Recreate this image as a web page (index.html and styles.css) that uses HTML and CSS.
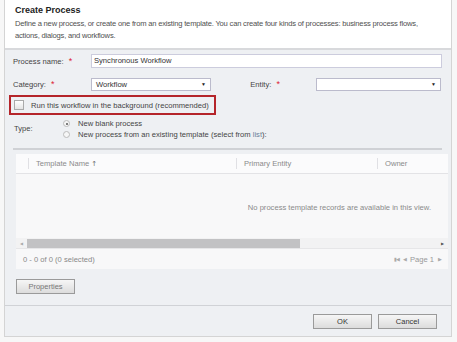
FILE: index.html
```html
<!DOCTYPE html>
<html lang="en">
<head>
    <meta charset="UTF-8">
    <title>Create Process</title>
    <link rel="stylesheet" href="styles.css">
</head>
<body>
    <div class="dialog">
        <div class="dialog-header">
            <h2>Create Process</h2>
            <p>Define a new process, or create one from an existing template. You can create four kinds of processes: business process flows, actions, dialogs, and workflows.</p>
        </div>

        <div class="dialog-body">
            <div class="form-row">
                <label class="field-label">Process name: <span class="req">*</span></label>
                <div class="text-input">Synchronous Workflow</div>
            </div>
            <div class="form-row">
                <label class="field-label">Category: <span class="req">*</span></label>
                <div class="select select-category">Workflow <span class="caret">&#9660;</span></div>
                <label class="entity-label">Entity: <span class="req">*</span></label>
                <div class="select select-entity"><span class="caret">&#9660;</span></div>
            </div>
            <div class="background-option">
                <span class="checkbox"></span>
                <span>Run this workflow in the background (recommended)</span>
            </div>
            <div class="type-row">
                <span class="type-label">Type:</span>
                <div class="radio-list">
                    <div class="radio-item"><span class="radio checked"></span>New blank process</div>
                    <div class="radio-item"><span class="radio"></span>New process from an existing template (select from&nbsp;<span class="link">list</span>):</div>
                </div>
            </div>

            <div class="grid">
                <div class="grid-head">
                    <span class="col col-first"></span>
                    <span class="col col-name">Template Name <span class="arrow">&#8593;</span></span>
                    <span class="col col-entity">Primary Entity</span>
                    <span class="col col-owner">Owner</span>
                </div>
                <div class="grid-empty">No process template records are available in this view.</div>
                <div class="scrollbar">
                    <span class="scroll-arrow">&#9664;</span>
                    <div class="scroll-track"><div class="scroll-thumb"></div></div>
                    <span class="scroll-arrow dark">&#9654;</span>
                </div>
                <div class="grid-foot">
                    <span>0 - 0 of 0 (0 selected)</span>
                    <span class="paging">
                        <span class="pg-icon">&#9646;&#9664;</span>
                        <span class="pg-icon">&#9664;</span>
                        <span>Page 1</span>
                        <span class="pg-icon">&#9654;</span>
                    </span>
                </div>
            </div>

            <button class="btn btn-props">Properties</button>
        </div>

        <div class="dialog-footer">
            <button class="btn btn-wide">OK</button>
            <button class="btn btn-wide">Cancel</button>
        </div>
    </div>
</body>
</html>
```

FILE: styles.css
```css
body {
    margin: 0;
    background-color: #f7f7f7;
    font-family: "Liberation Sans", Arial, sans-serif;
    font-size: 7.6px;
    color: #444;
}
.dialog {
    width: 446px;
    margin-left: 4px;
    border-left: 1px solid #d4d4d4;
    border-right: 1px solid #d4d4d4;
    border-bottom: 1px solid #d4d4d4;
    background-color: #eef0f3;
}
.dialog-header {
    background: #fff;
    height: 50px;
    padding: 5px 10px 0 10px;
    box-sizing: border-box;
    border-bottom: 2px solid #d8d9dc;
}
.dialog-header h2 {
    margin: 0;
    font-size: 9px;
    font-weight: bold;
    color: #222;
}
.dialog-header p {
    margin: 3px 0 0 0;
    line-height: 12px;
    color: #505050;
    letter-spacing: -0.2px;
}
.dialog-body {
    padding: 4px 9px 11px 8px;
    border-bottom: 1px solid #d0d2d6;
}
.form-row {
    display: flex;
    align-items: center;
    height: 14px;
    margin-bottom: 9px;
    white-space: nowrap;
}
.field-label {
    width: 78px;
    color: #444;
}
.req {
    color: #d23;
    font-size: 9px;
    margin-left: 3px;
}
.text-input {
    flex: 1;
    height: 14px;
    box-sizing: border-box;
    background: #fff;
    border: 1px solid #ccd;
    padding-left: 2px;
    line-height: 12px;
    color: #333;
}
.select {
    height: 13px;
    box-sizing: border-box;
    background: #fff;
    border: 1px solid #bbc;
    display: flex;
    justify-content: space-between;
    padding: 0 4px;
    line-height: 11px;
    color: #333;
}
.caret {
    font-size: 5px;
    color: #222;
}
.select-category {
    width: 120px;
}
.entity-label {
    width: 105px;
    text-align: right;
    padding-right: 36px;
    box-sizing: border-box;
}
.select-entity {
    width: 125px;
    justify-content: flex-end;
}
.background-option {
    display: flex;
    align-items: center;
    width: 207px;
    height: 20px;
    box-sizing: border-box;
    margin: -5px 0 0 -4px;
    border: 2px solid #b5252a;
    padding-left: 3px;
    gap: 7px;
    white-space: nowrap;
    color: #444;
}
.checkbox {
    width: 8px;
    height: 8px;
    border: 1px solid #aaa;
    background: linear-gradient(#fff, #e4e4e4);
}
.type-row {
    display: flex;
    margin-top: 3px;
    padding-left: 1px;
    padding-bottom: 8px;
    border-bottom: 2px solid #cfd1d5;
}
.type-label {
    width: 49px;
    margin-top: 6px;
}
.radio-list {
    display: flex;
    flex-direction: column;
}
.radio-item {
    display: flex;
    align-items: center;
    height: 11px;
    line-height: 11px;
}
.radio {
    width: 7px;
    height: 7px;
    border: 1px solid #bbb;
    border-radius: 50%;
    background: #f6f6f6;
    margin-right: 8px;
    box-sizing: border-box;
    position: relative;
}
.radio.checked::after {
    content: "";
    position: absolute;
    left: 1.5px;
    top: 1.5px;
    width: 2px;
    height: 2px;
    border-radius: 50%;
    background: #555;
}
.link {
    color: #6a7f9a;
}
.grid {
    margin: 4px 0 0 3px;
    width: 432px;
    background: #f8f8f9;
    color: #8a8a8a;
}
.grid-head {
    display: flex;
    align-items: center;
    height: 19px;
    border-bottom: 1px solid #e3e3e6;
    background: #fbfbfc;
}
.col {
    height: 11px;
    line-height: 11px;
    border-left: 1px solid #e0e0e4;
    padding-left: 7px;
    box-sizing: border-box;
}
.col-first {
    width: 13px;
    border-left: none;
    padding: 0;
    border-right: 1px solid #e0e0e4;
}
.col-first + .col {
    border-left: none;
}
.col-name {
    width: 207px;
}
.col-entity {
    width: 141px;
}
.col-owner {
    flex: 1;
}
.arrow {
    color: #666;
    font-family: "DejaVu Sans", sans-serif;
    font-size: 7px;
}
.grid-empty {
    height: 64px;
    padding: 29px 17px 0 0;
    box-sizing: border-box;
    text-align: right;
}
.scrollbar {
    display: flex;
    align-items: center;
    height: 10px;
    padding: 0 4px;
    gap: 4px;
    border-bottom: 1px solid #e6e6e8;
    background: #f2f2f3;
}
.scroll-arrow {
    font-size: 4px;
    color: #aaa;
}
.scroll-arrow.dark {
    color: #555;
}
.scroll-track {
    flex: 1;
    height: 9px;
}
.scroll-thumb {
    width: 273px;
    height: 9px;
    background: #c2c2c4;
}
.grid-foot {
    display: flex;
    justify-content: space-between;
    align-items: center;
    height: 20px;
    padding: 0 7px;
    color: #888;
}
.paging {
    display: flex;
    align-items: center;
    gap: 4px;
    color: #999;
}
.pg-icon {
    font-size: 5px;
    letter-spacing: -1px;
    color: #aaa;
}
.btn {
    font-family: "Liberation Sans", Arial, sans-serif;
    font-size: 7.5px;
    color: #333;
    border: 1px solid #9a9a9a;
    background: linear-gradient(#f6f6f6, #dcdcdc);
    padding: 0;
    height: 15px;
    box-sizing: border-box;
}
.btn-props {
    display: block;
    width: 59px;
    margin: 10px 0 0 3px;
    color: #777;
}
.dialog-footer {
    display: flex;
    justify-content: flex-end;
    gap: 6px;
    padding: 8px 14px 7px 0;
}
.btn-wide {
    width: 59px;
}
```
